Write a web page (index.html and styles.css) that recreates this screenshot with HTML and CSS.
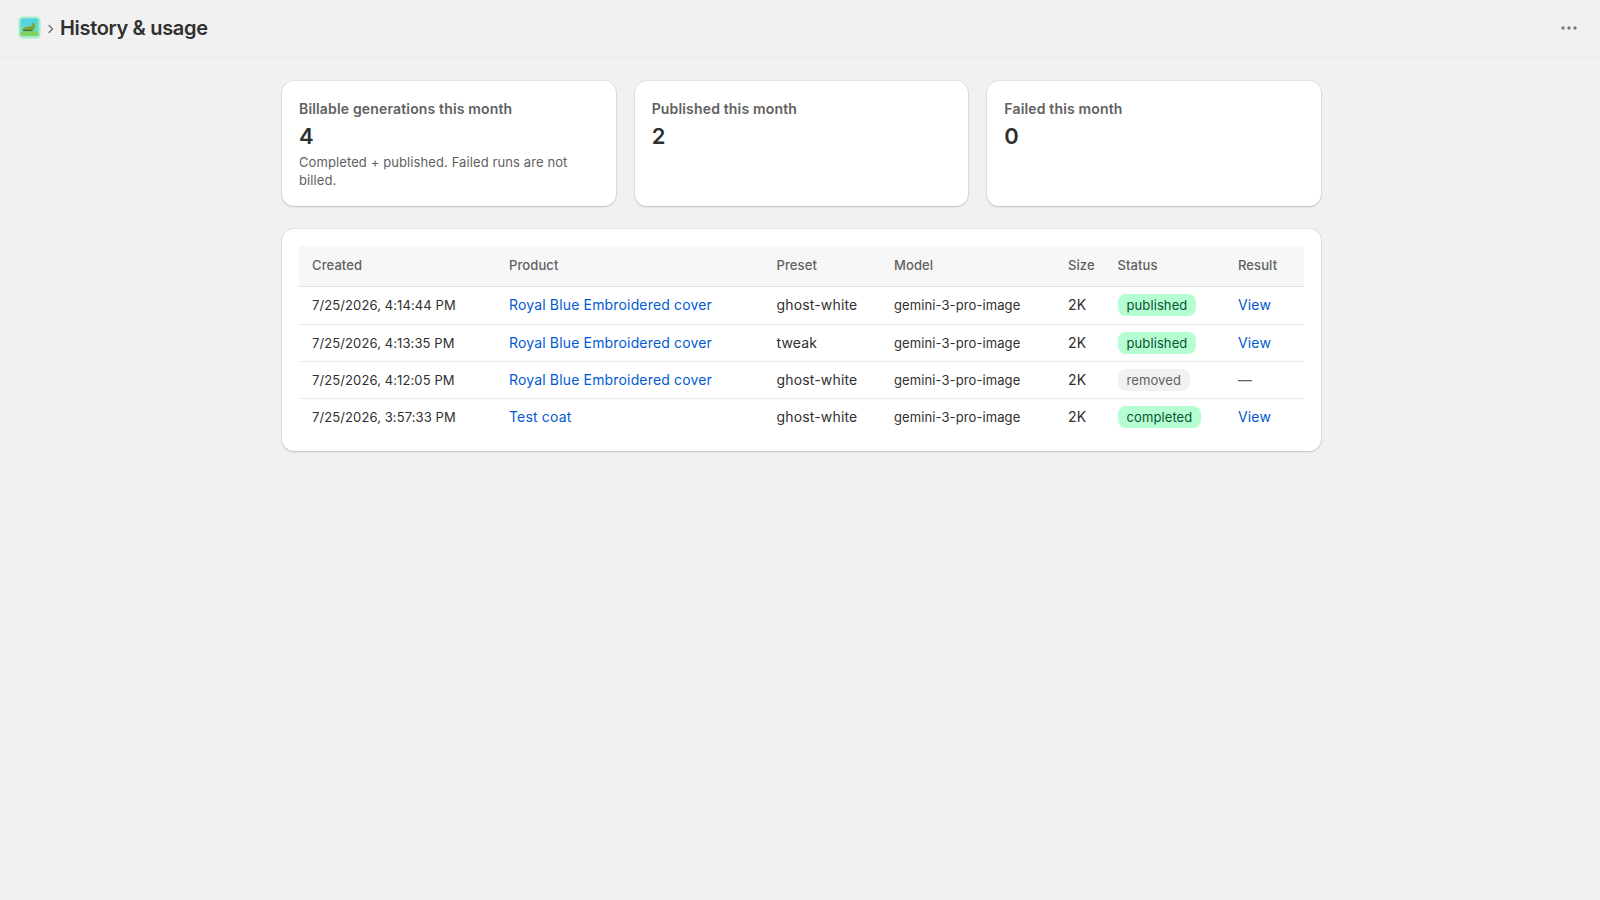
FILE: index.html
```html
<!DOCTYPE html>
<html lang="en">
<head>
<meta charset="utf-8">
<title>History &amp; usage</title>
<link rel="stylesheet" href="styles.css">
</head>
<body>
<header class="topbar">
  <div class="crumbs">
    <svg class="logo" width="24" height="24" viewBox="0 0 24 24" aria-hidden="true">
      <defs>
        <linearGradient id="bg" x1="0" y1="0" x2="0" y2="1"><stop offset="0" stop-color="#4fd0ea"/><stop offset="0.7" stop-color="#68d8c4"/><stop offset="1" stop-color="#86e08a"/></linearGradient>
      </defs>
      <rect x="0.5" y="0.5" width="22" height="22" rx="4.500" fill="#a6eeca"/>
      <rect x="2.500" y="2.500" width="18" height="17" rx="2.500" fill="url(#bg)"/>
      <rect x="2.500" y="15.500" width="18" height="4.500" rx="1.500" fill="#82d264"/>
      <path d="M4.500 14.500c.2-2 1.800-3.400 4.500-3.600 2.200-.2 4-.5 4.800-1.600l.2-2.700 1.100 1.400 1.400-1.400.2 2.700c.7 1.200.4 2.900-.6 3.900-.9 1-2 1.300-3.300 1.300z" fill="#7ba62f"/>
      <path d="M5 14.500h9.500" stroke="#4a6e1f" stroke-width="1.200"/>
    </svg>
    <svg class="chev" width="8" height="12" viewBox="0 0 8 12" aria-hidden="true"><path d="M2 2.500 5.500 6 2 9.500" fill="none" stroke="#6f6f6f" stroke-width="1.300" stroke-linecap="round" stroke-linejoin="round"/></svg>
    <h1 class="title">History &amp; usage</h1>
  </div>
  <svg class="more" width="18" height="6" viewBox="0 0 18 6" aria-hidden="true"><circle cx="3" cy="3" r="1.700"/><circle cx="9" cy="3" r="1.700"/><circle cx="15" cy="3" r="1.700"/></svg>
</header>
<main class="page">
  <section class="stats">
    <div class="card stat">
      <div class="stat-label">Billable generations this month</div>
      <div class="stat-value">4</div>
      <div class="stat-note">Completed + published. Failed runs are not billed.</div>
    </div>
    <div class="card stat">
      <div class="stat-label">Published this month</div>
      <div class="stat-value">2</div>
    </div>
    <div class="card stat">
      <div class="stat-label">Failed this month</div>
      <div class="stat-value">0</div>
    </div>
  </section>
  <section class="card table-card">
    <table class="runs">
      <colgroup>
        <col class="c-created"><col class="c-product"><col class="c-preset"><col class="c-model"><col class="c-size"><col class="c-status"><col class="c-result">
      </colgroup>
      <thead>
        <tr><th>Created</th><th>Product</th><th>Preset</th><th>Model</th><th>Size</th><th>Status</th><th>Result</th></tr>
      </thead>
      <tbody>
        <tr><td class="small">7/25/2026, 4:14:44 PM</td><td><a href="#">Royal Blue Embroidered cover</a></td><td>ghost-white</td><td class="small">gemini-3-pro-image</td><td>2K</td><td><span class="badge ok">published</span></td><td><a href="#">View</a></td></tr>
        <tr><td class="small">7/25/2026, 4:13:35 PM</td><td><a href="#">Royal Blue Embroidered cover</a></td><td>tweak</td><td class="small">gemini-3-pro-image</td><td>2K</td><td><span class="badge ok">published</span></td><td><a href="#">View</a></td></tr>
        <tr><td class="small">7/25/2026, 4:12:05 PM</td><td><a href="#">Royal Blue Embroidered cover</a></td><td>ghost-white</td><td class="small">gemini-3-pro-image</td><td>2K</td><td><span class="badge off">removed</span></td><td class="muted">—</td></tr>
        <tr><td class="small">7/25/2026, 3:57:33 PM</td><td><a href="#">Test coat</a></td><td>ghost-white</td><td class="small">gemini-3-pro-image</td><td>2K</td><td><span class="badge ok">completed</span></td><td><a href="#">View</a></td></tr>
      </tbody>
    </table>
  </section>
</main>
</body>
</html>
```
FILE: styles.css
```css
* { box-sizing: border-box; }
html, body { margin: 0; height: 100%; }
body {
  background: #f1f1f1;
  color: #303030;
  font-family: Inter, "Liberation Sans", sans-serif;
  font-size: 14px;
  line-height: 20px;
}
.topbar {
  height: 58px;
  display: flex;
  align-items: center;
  justify-content: space-between;
  padding: 0 22px 2px 18px;
  border-bottom: 1px solid #e8e8e8;
}
.crumbs { display: flex; align-items: center; }
.logo { display: block; }
.chev { margin: 2px 5px 0 5px; display: block; }
.title { margin: 0; font-size: 20px; line-height: 28px; font-weight: 600; letter-spacing: -0.33px; color: #303030; }
.more { fill: #7a7a7a; display: block; }
.page {
  width: 1039px;
  margin-left: 282px;
  padding-top: 23px;
  display: flex;
  flex-direction: column;
  gap: 23px;
}
.stats { display: grid; grid-template-columns: repeat(3, 1fr); gap: 19px; }
.card {
  background: #fff;
  border-radius: 12px;
  box-shadow: 0 0 0 1px rgba(0,0,0,.05), 0 1px 2px 0 rgba(0,0,0,.16);
}
.stat { height: 125px; padding: 17px 17px 16px; }
.stat-label { font-size: 14px; line-height: 22px; font-weight: 600; letter-spacing: .16px; color: #616161; }
.stat-value { font-size: 22px; line-height: 32px; font-weight: 600; color: #303030; margin-top: 0; }
.stat-note { font-size: 13px; line-height: 17.500px; letter-spacing: .1px; color: #616161; margin-top: 2px; }
.table-card { padding: 17px 17px 16px; }
.runs { width: 100%; border-collapse: collapse; table-layout: fixed; letter-spacing: .16px; }
.c-created { width: 197px; }
.c-product { width: 267.500px; }
.c-preset { width: 117.500px; }
.c-model { width: 174px; }
.c-size { width: 49.500px; }
.c-status { width: 120.500px; }
.runs th {
  height: 40px;
  padding: 0 13px 2px;
  background: #f7f7f7;
  border-bottom: 1px solid #e3e3e3;
  text-align: left;
  font-size: 13px;
  font-weight: 500;
  letter-spacing: .1px;
  color: #616161;
}
.runs td {
  height: 37px;
  padding: 0 13px;
  border-bottom: 1px solid #ebebeb;
  white-space: nowrap;
  color: #303030;
}
.runs tbody tr:first-child td { height: 38px; }
.runs tbody tr:last-child td { border-bottom: 0; }
.runs td.small { font-size: 13px; letter-spacing: .1px; }
.runs td.muted { color: #616161; }
.runs a { color: #005bd3; text-decoration: none; }
.badge {
  display: inline-block;
  padding: 0 9px;
  border-radius: 8px;
  font-size: 13px;
  line-height: 22px;
  letter-spacing: .1px;
  vertical-align: middle;
}
.badge.ok { background: #b4fed2; color: #0c5132; }
.badge.off { background: #f1f1f1; color: #616161; }
```
